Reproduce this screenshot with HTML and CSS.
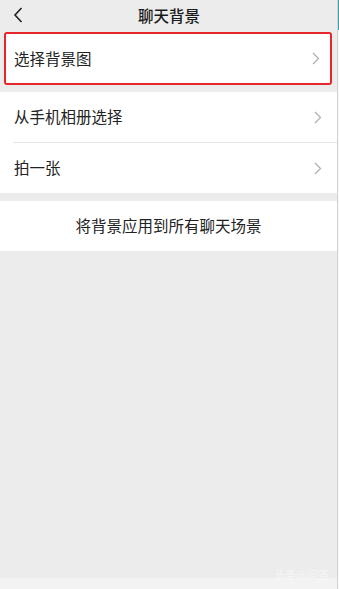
FILE: index.html
```html
<!DOCTYPE html>
<html lang="zh">
<head>
<meta charset="utf-8">
<link rel="stylesheet" href="styles.css">
</head>
<body>
<div class="screen">
  <div class="main">
    <header class="topbar">
      <svg class="back" width="10" height="16" viewBox="0 0 10 16"><path d="M8.5 1 L2 8 L8.5 15" fill="none" stroke="#222" stroke-width="1.6"/></svg>
      <h1 class="title">聊天背景</h1>
    </header>
    <div class="highlight">
      <div class="row">
        <span class="label">选择背景图</span>
        <svg class="chev" width="8" height="13" viewBox="0 0 8 13"><path d="M1 1 L6.5 6.5 L1 12" fill="none" stroke="#adadad" stroke-width="1.2"/></svg>
      </div>
    </div>
    <div class="group">
      <div class="row">
        <span class="label">从手机相册选择</span>
        <svg class="chev" width="8" height="13" viewBox="0 0 8 13"><path d="M1 1 L6.5 6.5 L1 12" fill="none" stroke="#adadad" stroke-width="1.2"/></svg>
      </div>
      <div class="divider"></div>
      <div class="row">
        <span class="label">拍一张</span>
        <svg class="chev" width="8" height="13" viewBox="0 0 8 13"><path d="M1 1 L6.5 6.5 L1 12" fill="none" stroke="#adadad" stroke-width="1.2"/></svg>
      </div>
    </div>
    <div class="group apply">
      <div class="row center">
        <span class="label">将背景应用到所有聊天场景</span>
      </div>
    </div>
    <div class="fill"></div>
    <div class="bottom">
      <span class="mark">头条@问答</span>
    </div>
  </div>
  <div class="edge"></div>
</div>
</body>
</html>
```
FILE: styles.css
```css
html, body {
  margin: 0;
  padding: 0;
}
body {
  width: 339px;
  height: 589px;
  overflow: hidden;
  font-family: "Noto Sans CJK SC", "Noto Sans", sans-serif;
  color: #222;
  background: #ececec;
}
.screen {
  display: flex;
  height: 589px;
}
.main {
  flex: 1;
  display: flex;
  flex-direction: column;
  background: #ececec;
}
.edge {
  width: 1px;
  border-left: 1px solid #d4d4d4;
  background: linear-gradient(#3a9fae 0, #3a9fae 30px, #f7f7f7 30px);
}
.topbar {
  height: 32px;
  display: flex;
  align-items: center;
  justify-content: center;
  position: relative;
}
.back {
  position: absolute;
  left: 13px;
  top: 7px;
}
.title {
  margin: 0;
  font-size: 15.5px;
  font-weight: 500;
  line-height: 1;
  color: #1a1a1a;
  padding-left: 1px;
}
.highlight {
  margin: 0 5px 0 4px;
  border: 2.5px solid #e5262a;
  border-radius: 3px;
  background: #fff;
}
.highlight .row {
  height: 49px;
  padding-left: 8px;
  padding-right: 10px;
}
.group {
  margin-top: 7px;
  background: #fff;
}
.apply {
  margin-top: 8px;
}
.row {
  height: 50px;
  display: flex;
  align-items: center;
  justify-content: space-between;
  padding: 0 15px 0 14px;
}
.row.center {
  justify-content: center;
  padding: 0;
}
.label {
  font-size: 15.5px;
  line-height: 1;
}
.divider {
  height: 1px;
  margin-left: 13px;
  background: #e6e6e6;
}
.fill {
  flex: 1;
}
.bottom {
  height: 11px;
  background: #f3f3f3;
  display: flex;
  justify-content: flex-end;
  align-items: flex-start;
  padding-right: 8px;
}
.mark {
  font-size: 11px;
  line-height: 1;
  margin-top: -9px;
  color: #f6f6f6;
}
```
